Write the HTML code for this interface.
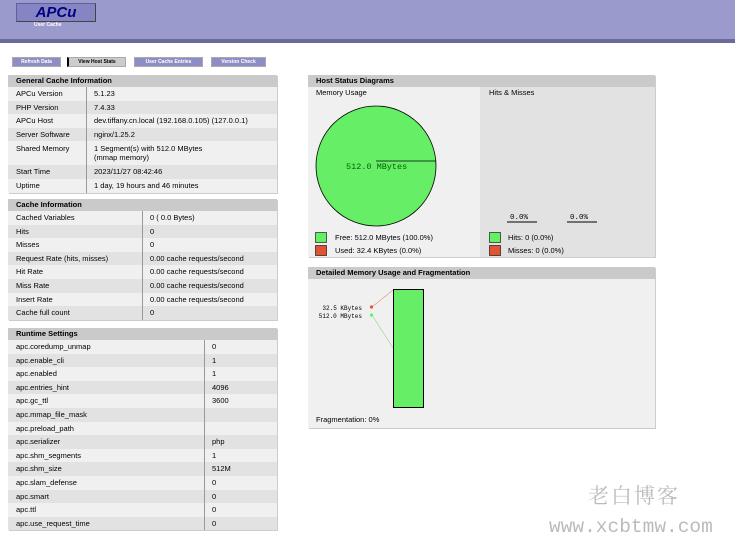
<!DOCTYPE html>
<html><head><meta charset="utf-8"><style>
*{margin:0;padding:0;box-sizing:border-box}
body{width:735px;height:555px;background:#fff;font-family:"Liberation Sans",Arial,sans-serif;font-size:8px;color:#000;position:relative;overflow:hidden}
.hdr{position:absolute;left:0;top:0;width:735px;height:39px;background:#9a9acc}
.hdr2{position:absolute;left:0;top:39px;width:735px;height:4px;background:#6b6b99}
.logo{position:absolute;left:16px;top:3px;width:80px;height:19px;background:#8585c4;border:1px solid #6060a0;border-right-color:#444;border-bottom-color:#444;font-size:15px;font-weight:bold;font-style:italic;color:#000080;text-align:center;line-height:17px}
.sub{position:absolute;left:34px;top:22px;font-size:5px;color:#fff;font-weight:bold}
.btn{position:absolute;top:57px;height:10px;background:#8e8ec6;border:1px solid #aaa;color:#fff;font-size:5px;font-weight:bold;line-height:8px;text-align:center}
.tbl{position:absolute;background:#e2e2e2;box-shadow:1px 1px 0 #ccc}
.th{height:12px;background:#cacaca;font-weight:bold;padding-left:8px;line-height:12px;font-size:7.5px}
.r{position:relative;height:13.6px;line-height:13.6px;font-size:7.5px}
.r:nth-child(odd){background:#f0f0f0}
.r:nth-child(even){background:#e2e2e2}
.r span{position:absolute;left:8px}
.r b{font-weight:normal;position:absolute;top:0;bottom:0;border-left:1px solid #999;padding-left:7px}
.box{position:absolute;font-size:7.5px}
</style></head><body>
<div class="hdr"></div><div class="hdr2"></div>
<div class="logo">APCu</div><div class="sub">User Cache</div>
<div class="btn" style="left:12px;width:49px">Refresh Data</div>
<div class="btn" style="left:67px;width:59px;background:#ccc;color:#000;border-left:2px solid #000">View Host Stats</div>
<div class="btn" style="left:134px;width:69px">User Cache Entries</div>
<div class="btn" style="left:211px;width:55px">Version Check</div>

<div class="tbl" style="left:8px;top:75px;width:269px">
<div class="th">General Cache Information</div>
<div>
<div class="r"><span>APCu Version</span><b style="left:78px">5.1.23</b></div>
<div class="r"><span>PHP Version</span><b style="left:78px">7.4.33</b></div>
<div class="r"><span>APCu Host</span><b style="left:78px">dev.tiffany.cn.local (192.168.0.105) (127.0.0.1)</b></div>
<div class="r"><span>Server Software</span><b style="left:78px">nginx/1.25.2</b></div>
<div class="r" style="height:24px;line-height:9px"><span style="top:3px">Shared Memory</span><b style="left:78px;padding-top:3px">1 Segment(s) with 512.0 MBytes<br>(mmap memory)</b></div>
<div class="r"><span>Start Time</span><b style="left:78px">2023/11/27 08:42:46</b></div>
<div class="r"><span>Uptime</span><b style="left:78px">1 day, 19 hours and 46 minutes</b></div>
</div></div>

<div class="tbl" style="left:8px;top:199px;width:269px">
<div class="th">Cache Information</div>
<div>
<div class="r"><span>Cached Variables</span><b style="left:134px">0 ( 0.0 Bytes)</b></div>
<div class="r"><span>Hits</span><b style="left:134px">0</b></div>
<div class="r"><span>Misses</span><b style="left:134px">0</b></div>
<div class="r"><span>Request Rate (hits, misses)</span><b style="left:134px">0.00 cache requests/second</b></div>
<div class="r"><span>Hit Rate</span><b style="left:134px">0.00 cache requests/second</b></div>
<div class="r"><span>Miss Rate</span><b style="left:134px">0.00 cache requests/second</b></div>
<div class="r"><span>Insert Rate</span><b style="left:134px">0.00 cache requests/second</b></div>
<div class="r"><span>Cache full count</span><b style="left:134px">0</b></div>
</div></div>

<div class="tbl" style="left:8px;top:328px;width:269px">
<div class="th">Runtime Settings</div>
<div>
<div class="r"><span>apc.coredump_unmap</span><b style="left:196px">0</b></div>
<div class="r"><span>apc.enable_cli</span><b style="left:196px">1</b></div>
<div class="r"><span>apc.enabled</span><b style="left:196px">1</b></div>
<div class="r"><span>apc.entries_hint</span><b style="left:196px">4096</b></div>
<div class="r"><span>apc.gc_ttl</span><b style="left:196px">3600</b></div>
<div class="r"><span>apc.mmap_file_mask</span><b style="left:196px"></b></div>
<div class="r"><span>apc.preload_path</span><b style="left:196px"></b></div>
<div class="r"><span>apc.serializer</span><b style="left:196px">php</b></div>
<div class="r"><span>apc.shm_segments</span><b style="left:196px">1</b></div>
<div class="r"><span>apc.shm_size</span><b style="left:196px">512M</b></div>
<div class="r"><span>apc.slam_defense</span><b style="left:196px">0</b></div>
<div class="r"><span>apc.smart</span><b style="left:196px">0</b></div>
<div class="r"><span>apc.ttl</span><b style="left:196px">0</b></div>
<div class="r"><span>apc.use_request_time</span><b style="left:196px">0</b></div>
</div></div>

<div class="tbl" style="left:308px;top:75px;width:347px;height:182px;background:#e2e2e2">
<div class="th">Host Status Diagrams</div>
<div style="position:absolute;left:0;top:12px;width:172px;height:170px;background:#f0f0f0"></div>
<div class="box" style="left:8px;top:13px">Memory Usage</div>
<div class="box" style="left:181px;top:13px">Hits &amp; Misses</div>
</div>
<svg style="position:absolute;left:0;top:0" width="735" height="555">
<circle cx="376" cy="166" r="60" fill="#66ee66" stroke="#000" stroke-width="0.8"/>
<line x1="376" y1="161" x2="436" y2="161" stroke="#000" stroke-width="0.8"/>
<text x="346" y="169" font-family="Liberation Mono,monospace" font-size="8.5" fill="#006600">512.0 MBytes</text>
<text x="510" y="219" font-family="Liberation Mono,monospace" font-size="7.5" fill="#000">0.0%</text>
<text x="570" y="219" font-family="Liberation Mono,monospace" font-size="7.5" fill="#000">0.0%</text>
<line x1="507" y1="222" x2="537" y2="222" stroke="#000"/>
<line x1="567" y1="222" x2="597" y2="222" stroke="#000"/>
<rect x="315.5" y="232.5" width="11" height="10" fill="#66ee66" stroke="#000" stroke-width=".6"/>
<rect x="315.5" y="245.5" width="11" height="10" fill="#dd5533" stroke="#000" stroke-width=".6"/>
<rect x="489.5" y="232.5" width="11" height="10" fill="#66ee66" stroke="#000" stroke-width=".6"/>
<rect x="489.5" y="245.5" width="11" height="10" fill="#dd5533" stroke="#000" stroke-width=".6"/>
</svg>
<div class="box" style="left:335px;top:233px">Free: 512.0 MBytes (100.0%)</div>
<div class="box" style="left:335px;top:246px">Used: 32.4 KBytes (0.0%)</div>
<div class="box" style="left:508px;top:233px">Hits: 0 (0.0%)</div>
<div class="box" style="left:508px;top:246px">Misses: 0 (0.0%)</div>

<div class="tbl" style="left:308px;top:267px;width:347px;height:161px;background:#f0f0f0">
<div class="th">Detailed Memory Usage and Fragmentation</div>
<div class="box" style="left:8px;top:148px">Fragmentation: 0%</div>
</div>
<svg style="position:absolute;left:0;top:0" width="735" height="555">
<rect x="393.5" y="289.5" width="30" height="118" fill="#66ee66" stroke="#000"/>
<line x1="372" y1="307" x2="393" y2="290" stroke="#dd5533" stroke-width=".5"/>
<line x1="372" y1="315" x2="393" y2="348" stroke="#66cc66" stroke-width=".5"/>
<circle cx="371.5" cy="307" r="1.6" fill="#dd5533"/>
<circle cx="371.5" cy="315" r="1.6" fill="#66ee66"/>
<text x="362" y="310" text-anchor="end" font-family="Liberation Mono,monospace" font-size="6">32.5 KBytes</text>
<text x="362" y="318" text-anchor="end" font-family="Liberation Mono,monospace" font-size="6">512.0 MBytes</text>
</svg>

<div style="position:absolute;left:588px;top:482px;font-family:'Noto Serif CJK SC','WenQuanYi Zen Hei',serif;font-size:21px;line-height:26px;color:#bbb;letter-spacing:2px">老白博客</div>
<div style="position:absolute;left:549px;top:515px;font-family:'Liberation Mono',monospace;font-size:19.5px;line-height:24px;color:#bbb">www.xcbtmw.com</div>
</body></html>
